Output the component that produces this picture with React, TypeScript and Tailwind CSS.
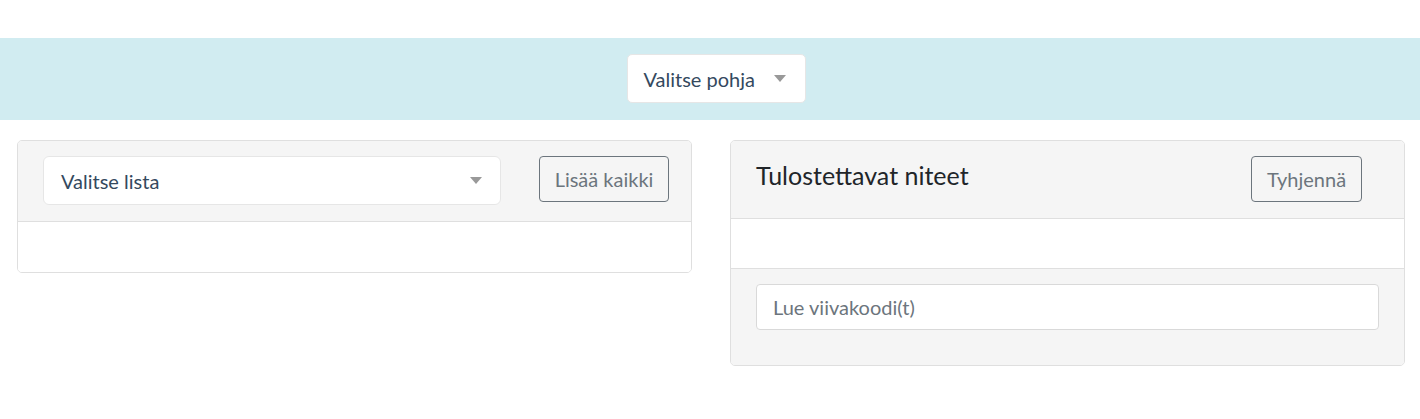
import React from "react";

function Caret({ className = "" }: { className?: string }) {
  return (
    <svg width="12" height="7" viewBox="0 0 12 7" className={className}>
      <path d="M0 0 L12 0 L6 7 Z" fill="#999" />
    </svg>
  );
}

export default function App() {
  return (
    <div className="min-h-[419px] bg-white font-['Lato','Segoe_UI',sans-serif] text-[#212529]">
      <div className="h-[38px]" />
      <div className="flex h-[82px] items-start justify-center bg-[#d1ecf1] pl-[12px] pt-[16px]">
        <div className="flex h-[49px] w-[179px] items-center justify-between rounded-[5px] border border-[#e6e6e6] bg-white pl-[16px] pr-[19px] text-[20px] text-[#34495e]">
          <span>Valitse pohja</span>
          <Caret />
        </div>
      </div>
      <div className="mt-[20px] flex items-start gap-[38px] pl-[17px] pr-[15px]">
        <div className="flex-1 overflow-hidden rounded-[5px] border border-[#dfdfdf]">
          <div className="flex items-start border-b border-[#dfdfdf] bg-[#f5f5f5] pb-[16px] pl-[25px] pt-[15px]">
            <div className="flex h-[49px] w-[458px] items-center justify-between rounded-[6px] border border-[#e6e6e6] bg-white pl-[17px] pr-[18px] text-[20px] text-[#34495e]">
              <span>Valitse lista</span>
              <Caret />
            </div>
            <button className="ml-[38px] flex h-[46px] w-[130px] items-center justify-center rounded-[4px] border border-[#6c757d] text-[20px] text-[#6c757d]">
              Lisää kaikki
            </button>
          </div>
          <div className="h-[50px] bg-white" />
        </div>
        <div className="flex-1 overflow-hidden rounded-[5px] border border-[#dfdfdf]">
          <div className="flex items-start border-b border-[#dfdfdf] bg-[#f5f5f5] pb-[16px] pl-[25px] pr-[42px] pt-[15px]">
            <h4 className="flex-1 pt-[4px] text-[25px] leading-[30px] text-[#212529]">Tulostettavat niteet</h4>
            <button className="flex h-[46px] w-[111px] items-center justify-center rounded-[4px] border border-[#6c757d] text-[20px] text-[#6c757d]">
              Tyhjennä
            </button>
          </div>
          <div className="h-[50px] border-b border-[#dfdfdf] bg-white" />
          <div className="bg-[#f5f5f5] px-[25px] pb-[35px] pt-[15px]">
            <input
              className="block h-[46px] w-full rounded-[4px] border border-[#d9d9d9] bg-white px-[16px] text-[20px] text-[#495057] outline-none placeholder:text-[#6c757d]"
              placeholder="Lue viivakoodi(t)"
            />
          </div>
        </div>
      </div>
    </div>
  );
}
